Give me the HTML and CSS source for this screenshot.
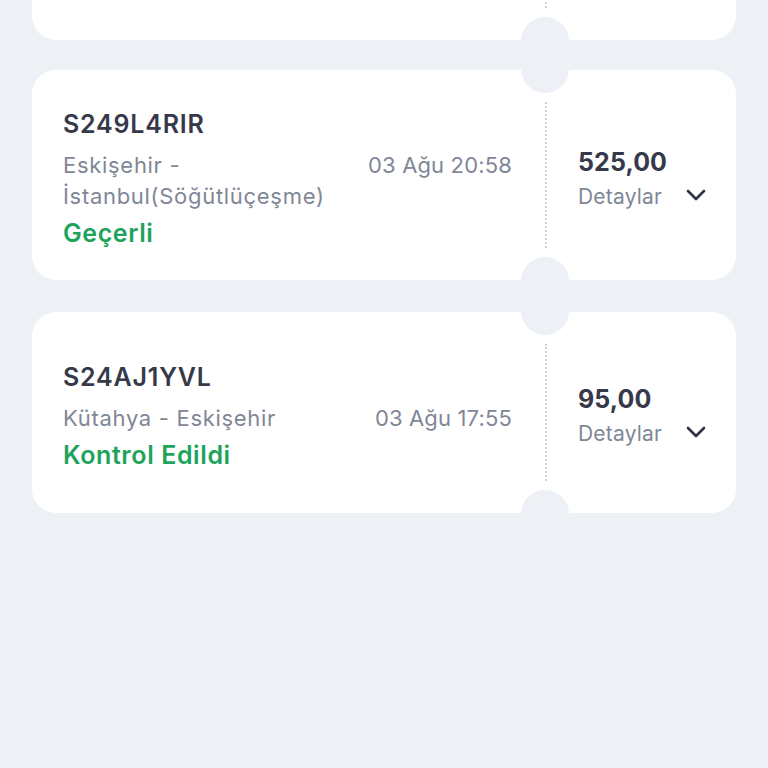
FILE: index.html
```html
<!DOCTYPE html>
<html lang="tr">
<head>
<meta charset="utf-8">
<link rel="stylesheet" href="styles.css">
</head>
<body>
<div class="list">
  <div class="ticket ticket-partial">
    <div class="info"></div>
    <div class="divider"></div>
    <div class="side"></div>
  </div>

  <div class="ticket">
    <div class="info">
      <div class="code">S249L4RIR</div>
      <div class="route-row">
        <div class="route">Eskişehir -<br>İstanbul(Söğütlüçeşme)</div>
        <div class="date">03 Ağu 20:58</div>
      </div>
      <div class="status">Geçerli</div>
    </div>
    <div class="divider"></div>
    <div class="side">
      <div class="price">525,00</div>
      <div class="details-row">
        <span class="details">Detaylar</span>
        <svg class="chev" width="20" height="12" viewBox="0 0 20 12"><path d="M2 2 L10 10 L18 2" fill="none" stroke="#2f3244" stroke-width="2.6" stroke-linecap="round" stroke-linejoin="round"/></svg>
      </div>
    </div>
  </div>

  <div class="ticket">
    <div class="info">
      <div class="code">S24AJ1YVL</div>
      <div class="route-row">
        <div class="route">Kütahya - Eskişehir</div>
        <div class="date">03 Ağu 17:55</div>
      </div>
      <div class="status">Kontrol Edildi</div>
    </div>
    <div class="divider"></div>
    <div class="side">
      <div class="price">95,00</div>
      <div class="details-row">
        <span class="details">Detaylar</span>
        <svg class="chev" width="20" height="12" viewBox="0 0 20 12"><path d="M2 2 L10 10 L18 2" fill="none" stroke="#2f3244" stroke-width="2.6" stroke-linecap="round" stroke-linejoin="round"/></svg>
      </div>
    </div>
  </div>
</div>
</body>
</html>
```
FILE: styles.css
```css
html, body {
  margin: 0;
  padding: 0;
  background: #edf0f5;
  font-family: Inter, Roboto, "Noto Sans", sans-serif;
  height: 768px;
  overflow: hidden;
}

.list {
  display: flex;
  flex-direction: column;
  gap: 32px;
  padding: 0 32px;
  margin-top: -161px;
}

.ticket {
  position: relative;
  display: grid;
  grid-template-columns: 513px 1px 1fr;
  align-items: center;
  background: #ffffff;
  border-radius: 24px;
  min-height: 201px;
  padding: 39px 0 31px;
  box-sizing: border-box;
}

.ticket-partial {
  height: 201px;
  margin-bottom: -2px;
}

.ticket::before,
.ticket::after {
  content: "";
  position: absolute;
  left: 489px;
  width: 48px;
  height: 48px;
  border-radius: 50%;
  background: #edf0f5;
}
.ticket::before { top: -25px; }
.ticket::after { bottom: -25px; }

.divider {
  align-self: stretch;
  margin: -7px 0 1px;
  border-left: 2px dotted #cfd2d8;
  width: 0;
}

.info {
  padding-left: 31px;
  padding-right: 33px;
}

.code {
  font-size: 25px;
  line-height: 30px;
  font-weight: 600;
  color: #363949;
  letter-spacing: 0.8px;
}

.route-row {
  display: flex;
  justify-content: space-between;
  align-items: flex-start;
  margin-top: 11px;
}

.route, .date {
  font-size: 22px;
  line-height: 31px;
  color: #7f8796;
  letter-spacing: 0.7px;
}

.date {
  letter-spacing: 0.15px;
}

.status {
  margin-top: 5px;
  font-size: 25px;
  line-height: 32px;
  font-weight: 600;
  color: #1ea35c;
  letter-spacing: 0.6px;
}

.side {
  padding-left: 32px;
  padding-right: 30px;
}

.price {
  font-size: 25px;
  line-height: 30px;
  font-weight: 700;
  color: #363949;
  letter-spacing: 0.1px;
}

.details-row {
  display: flex;
  justify-content: space-between;
  align-items: center;
  margin-top: 5px;
}

.details {
  font-size: 21px;
  line-height: 30px;
  color: #7f8796;
  letter-spacing: 0.2px;
}

.chev {
  display: block;
  margin-top: -4px;
}
```
